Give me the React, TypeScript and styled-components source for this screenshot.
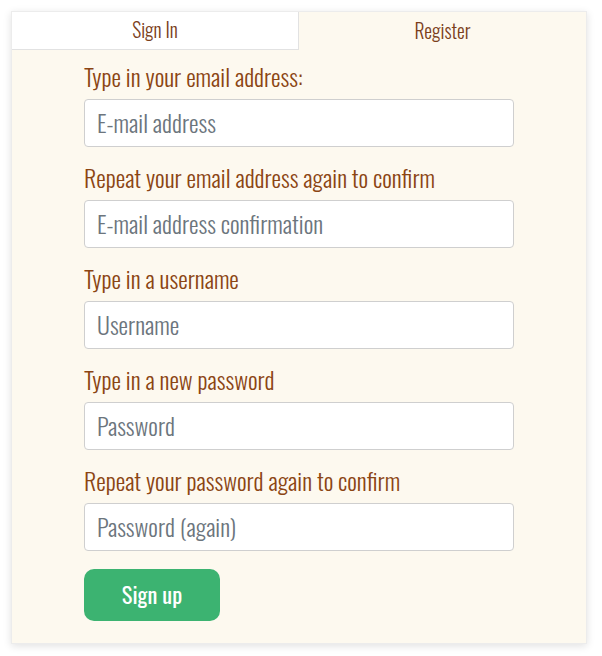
import React from "react";
import styled, { createGlobalStyle } from "styled-components";

const Global = createGlobalStyle`
  html, body { margin: 0; padding: 0; background: #ffffff; }
  body { font-family: "Oswald", "Liberation Sans", sans-serif; }
  * { box-sizing: border-box; }
`;

const Page = styled.div`
  padding: 11px 15px 13px 11px;
`;

const Card = styled.div`
  width: 576px;
  background: #fdf9ef;
  box-shadow: 0 2px 8px rgba(0, 0, 0, 0.12);
  border: 1px solid #ececec;
`;

const Tabs = styled.div`
  display: grid;
  grid-template-columns: 1fr 1fr;
`;

const Tab = styled.div<{ $active?: boolean }>`
  height: 38px;
  padding-bottom: 2px;
  display: flex;
  align-items: center;
  justify-content: center;
  font-size: 19.5px;
  font-weight: 300;
  color: #7b3f1c;
  background: ${(p) => (p.$active ? "transparent" : "#ffffff")};
  border-right: ${(p) => (p.$active ? "none" : "1px solid #e2e2e2")};
  border-bottom: ${(p) => (p.$active ? "none" : "1px solid #e2e2e2")};
`;

const Form = styled.form`
  width: 430px;
  margin: 0 auto;
  padding: 14px 0 22px;
  display: flex;
  flex-direction: column;
`;

const Field = styled.div`
  display: flex;
  flex-direction: column;
  margin-bottom: 18px;
`;

const Label = styled.label`
  font-size: 24px;
  font-weight: 300;
  line-height: 24px;
  color: #8b4513;
  margin-bottom: 11px;
`;

const Input = styled.input`
  height: 48px;
  width: 100%;
  border: 1px solid #cfcfcf;
  border-radius: 4px;
  background: #ffffff;
  padding: 0 12px 2px;
  font-family: inherit;
  font-weight: 300;
  font-size: 24px;
  color: #495057;
  &::placeholder { color: #6c757d; }
`;

const Button = styled.button`
  width: 136px;
  height: 52px;
  padding: 0 0 4px;
  border: none;
  border-radius: 10px;
  background: #3cb371;
  color: #ffffff;
  font-family: inherit;
  font-weight: 400;
  font-size: 22.4px;
  cursor: pointer;
`;

const fields = [
  { label: "Type in your email address:", placeholder: "E-mail address", type: "email" },
  { label: "Repeat your email address again to confirm", placeholder: "E-mail address confirmation", type: "email" },
  { label: "Type in a username", placeholder: "Username", type: "text" },
  { label: "Type in a new password", placeholder: "Password", type: "password" },
  { label: "Repeat your password again to confirm", placeholder: "Password (again)", type: "password" },
];

export default function App() {
  return (
    <>
      <Global />
      <Page>
        <Card>
          <Tabs>
            <Tab>Sign In</Tab>
            <Tab $active>Register</Tab>
          </Tabs>
          <Form onSubmit={(e) => e.preventDefault()}>
            {fields.map((f) => (
              <Field key={f.placeholder}>
                <Label>{f.label}</Label>
                <Input type={f.type} placeholder={f.placeholder} />
              </Field>
            ))}
            <div>
              <Button type="submit">Sign up</Button>
            </div>
          </Form>
        </Card>
      </Page>
    </>
  );
}
